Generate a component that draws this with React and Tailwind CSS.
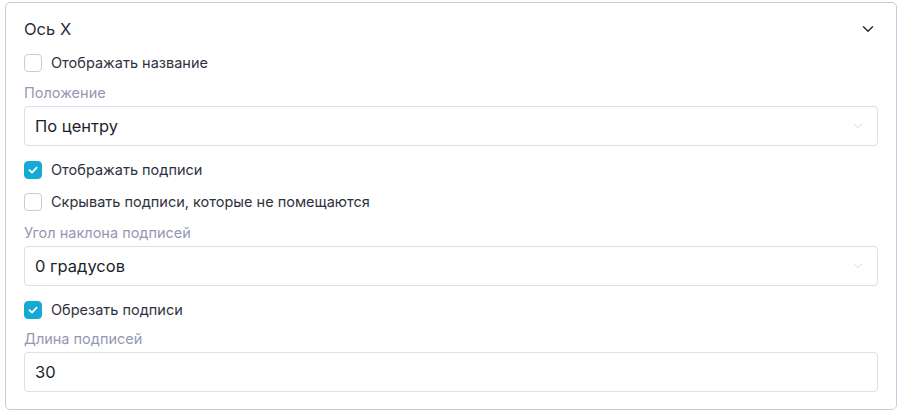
import { ChevronDown } from "lucide-react"

const Checkbox = ({ checked, label, className = "" }) => (
  <label className={`flex items-center gap-[9px] h-6 ${className}`}>
    <span
      className={`w-[18px] h-[18px] rounded-[4px] flex items-center justify-center border ${
        checked ? "bg-[#16a9d3] border-[#16a9d3]" : "bg-white border-[#c9cbdb]"
      }`}
    >
      {checked && (
        <svg width="12" height="12" viewBox="0 0 12 12" fill="none">
          <path d="M2.5 6.2L5 8.6L9.6 3.6" stroke="white" strokeWidth="1.8" strokeLinecap="round" strokeLinejoin="round" />
        </svg>
      )}
    </span>
    <span className="text-[14.5px] text-[#2f3140]">{label}</span>
  </label>
)

const Field = ({ label, value, select, className = "" }) => (
  <div className={className}>
    <div className="text-[14.5px] leading-5 text-[#9597b3]">{label}</div>
    <div className="mt-[3px] h-10 rounded-[4px] border border-[#dcdee9] flex items-center justify-between px-[10px]">
      <span className="text-[16.5px] text-[#1e1f29]">{value}</span>
      {select && <ChevronDown size={14} strokeWidth={1.2} className="text-[#c3c5d6] mr-[2px]" />}
    </div>
  </div>
)

export default function App() {
  return (
    <div className="bg-white w-[902px] h-[417px] pt-[2px] pl-[5px]" style={{ fontFamily: "Inter, 'Noto Sans', sans-serif" }}>
      <div className="w-[892px] h-[408px] border border-[#c8cce0] rounded-[5px] px-[18px] pt-[14px]">
        <div className="flex items-center justify-between h-6">
          <span className="text-[16.5px] font-normal text-[#2b2d3a]">Ось X</span>
          <ChevronDown size={18} strokeWidth={1.8} className="text-[#22242f] mr-[1px]" />
        </div>
        <Checkbox className="mt-[10px]" label="Отображать название" />
        <Field className="mt-[8px]" label="Положение" value="По центру" select />
        <Checkbox className="mt-[12px]" checked label="Отображать подписи" />
        <Checkbox className="mt-[8px]" label="Скрывать подписи, которые не помещаются" />
        <Field className="mt-[9px]" label="Угол наклона подписей" value="0 градусов" select />
        <Checkbox className="mt-[12px]" checked label="Обрезать подписи" />
        <Field className="mt-[7px]" label="Длина подписей" value="30" />
      </div>
    </div>
  )
}
